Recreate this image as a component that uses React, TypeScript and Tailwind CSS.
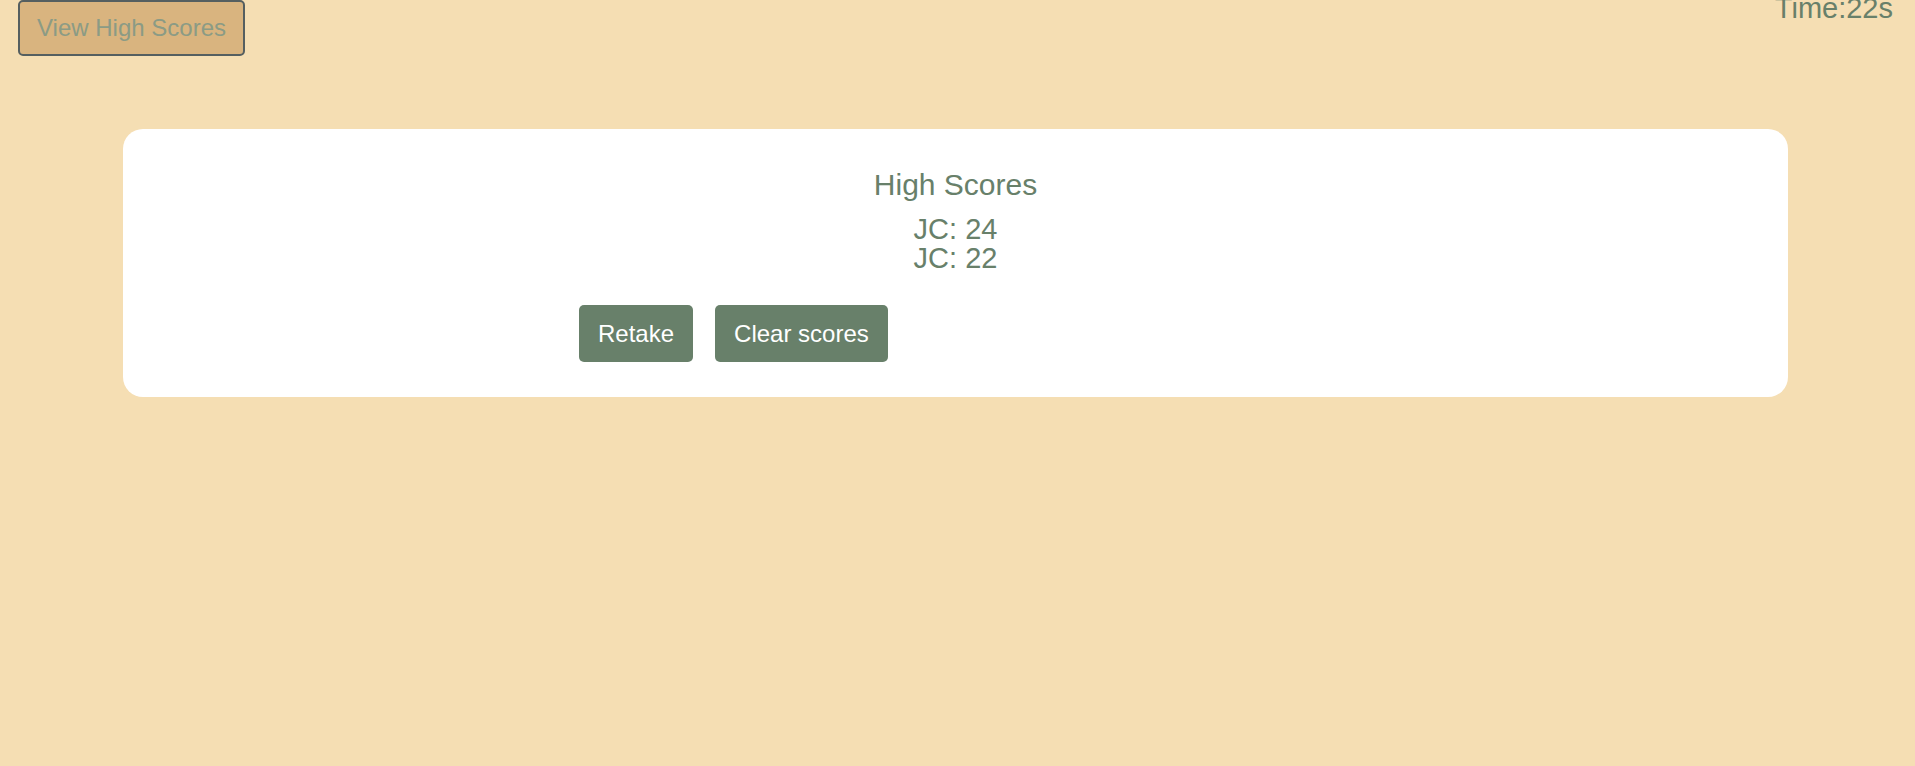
export default function App() {
  return (
    <div className="min-h-[766px] w-full bg-[#f5deb3] overflow-hidden" style={{ fontFamily: '"Liberation Sans", Arial, sans-serif' }}>
      <div className="flex items-start justify-between">
        <button className="ml-[18px] h-[56px] w-[227px] rounded-[5px] border-2 border-[#555f60] bg-[#d9b47f] text-[24px] leading-[28px] text-[#8b9b85]">
          View High Scores
        </button>
        <div className="mr-[22px] -mt-[8px] text-[29px] leading-[32px] text-[#68806a]">Time:22s</div>
      </div>
      <div className="ml-[123px] mt-[73px] w-[1665px] rounded-[20px] bg-white pt-[39px] pb-[35px]">
        <div className="text-center text-[30px] leading-[34px] text-[#68806a]">High Scores</div>
        <div className="mt-[13px] flex flex-col items-center text-[29px] leading-[29px] text-[#68806a]">
          <div>JC: 24</div>
          <div>JC: 22</div>
        </div>
        <div className="mt-[32px] ml-[456px] flex gap-[22px]">
          <button className="flex h-[57px] items-center rounded-[5px] bg-[#68806a] px-[19px] text-[24px] leading-[28px] text-white">
            Retake
          </button>
          <button className="flex h-[57px] items-center rounded-[5px] bg-[#68806a] px-[19px] text-[24px] leading-[28px] text-white">
            Clear scores
          </button>
        </div>
      </div>
    </div>
  );
}
